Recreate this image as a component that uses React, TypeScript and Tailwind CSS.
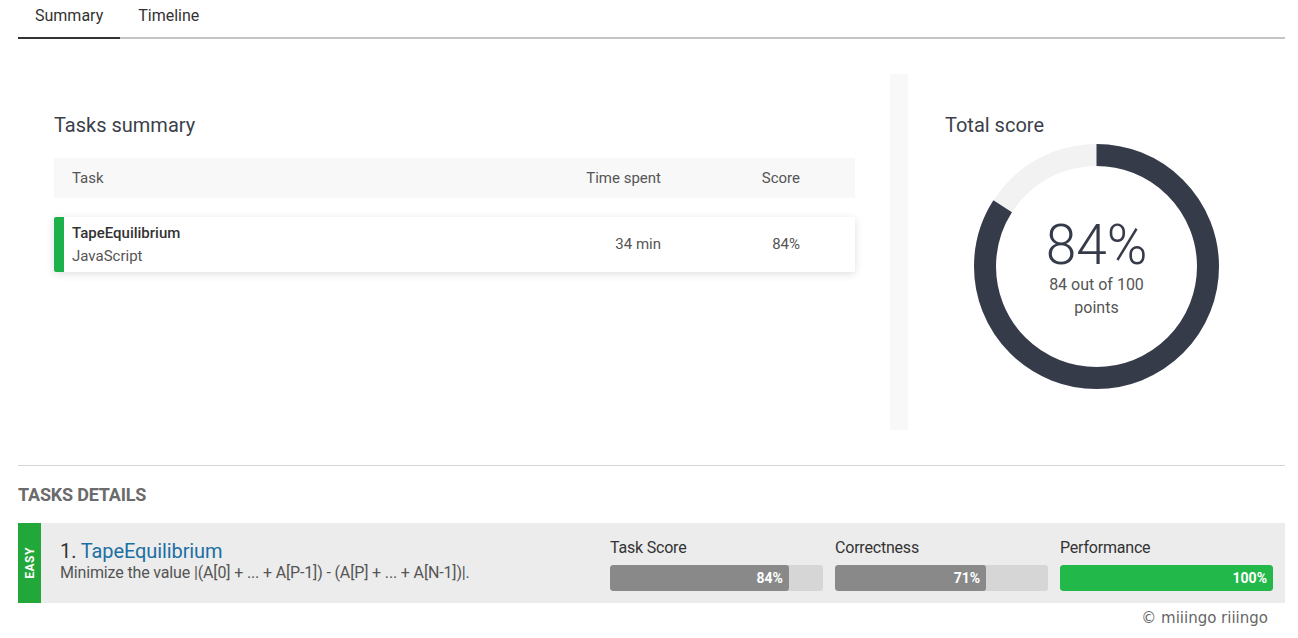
import React from 'react';

const TASKS = [{ name: 'TapeEquilibrium', lang: 'JavaScript', time: '34 min', score: '84%' }];

const METRICS = [
  { label: 'Task Score', value: 84, green: false },
  { label: 'Correctness', value: 71, green: false },
  { label: 'Performance', value: 100, green: true },
];

function Donut({ percent }: { percent: number }) {
  const r = 111.5;
  const c = 2 * Math.PI * r;
  return (
    <div className="relative w-[245px] h-[245px]">
      <svg width="245" height="245" viewBox="0 0 245 245">
        <circle cx="122.5" cy="122.5" r={r} fill="none" stroke="#f2f2f2" strokeWidth="22" />
        <circle
          cx="122.5"
          cy="122.5"
          r={r}
          fill="none"
          stroke="#363b4a"
          strokeWidth="22"
          strokeDasharray={`${(c * percent) / 100} ${c}`}
          transform="rotate(-90 122.5 122.5)"
        />
      </svg>
      <div className="absolute inset-0 flex flex-col items-center justify-center pt-[2px]">
        <div className="text-[55px] leading-[58px] text-[#363b4a] font-light">84%</div>
        <div className="text-[16px] leading-[23px] text-[#555] text-center mt-[-1px]">
          84 out of 100
          <br />
          points
        </div>
      </div>
    </div>
  );
}

export default function App() {
  return (
    <div className="pl-[18px] pr-[13px] bg-white min-h-[638px] text-[#333]" style={{ fontFamily: 'Roboto, "Noto Sans", sans-serif' }}>
      {/* tabs */}
      <div className="flex border-b-2 border-[#c4c4c4]">
        <div className="px-[17px] pt-[6px] pb-[11px] text-[16px] leading-[20px] text-[#333] border-b-2 border-[#333] -mb-[2px]">
          Summary
        </div>
        <div className="px-[18px] pt-[6px] pb-[11px] text-[16px] leading-[20px] text-[#333]">Timeline</div>
      </div>

      {/* summary */}
      <div className="flex mt-[35px]">
        <div className="flex-1 pl-[36px] pr-[35px] pt-[37px]">
          <h2 className="text-[20px] leading-[28px] text-[#3a3f4b] mb-[19px]">Tasks summary</h2>
          <div className="flex items-center h-[40px] bg-[#f8f8f9] text-[15px] text-[#555] pl-[18px]">
            <div className="flex-1">Task</div>
            <div className="w-[120px] text-right">Time spent</div>
            <div className="w-[139px] text-right">Score</div>
            <div className="w-[55px]" />
          </div>
          {TASKS.map((t) => (
            <div
              key={t.name}
              className="flex items-center h-[55px] mt-[19px] bg-white shadow-[0_2px_8px_rgba(0,0,0,0.13)] border-l-[10px] border-[#1db14b] rounded-l-[2px] pl-[8px] text-[15px]"
            >
              <div className="flex-1 leading-[23px]">
                <div className="font-medium text-[#333]">{t.name}</div>
                <div className="text-[#555]">{t.lang}</div>
              </div>
              <div className="w-[120px] text-right text-[#555]">{t.time}</div>
              <div className="w-[139px] text-right text-[#555]">{t.score}</div>
              <div className="w-[55px]" />
            </div>
          ))}
        </div>
        <div className="w-[395px] border-l-[18px] border-[#f8f8f8] pt-[37px] pb-[41px]">
          <h2 className="pl-[37px] text-[20px] leading-[28px] text-[#3a3f4b] mb-[5px]">Total score</h2>
          <div className="flex justify-center">
            <Donut percent={84} />
          </div>
        </div>
      </div>

      {/* details */}
      <div className="mt-[35px] border-t border-[#d4d4d4]">
        <h3 className="mt-[17px] text-[18px] leading-[24px] font-bold text-[#6b6b6b] tracking-[-0.2px]">TASKS DETAILS</h3>
        <div className="flex mt-[16px] h-[80px] bg-[#ececec]">
          <div className="w-[23px] bg-[#22a83a] flex items-center justify-center">
            <span className="block -rotate-90 text-white text-[12px] font-bold tracking-[0.5px]">EASY</span>
          </div>
          <div className="flex-1 pl-[19px] pt-[17px]">
            <div className="text-[20px] leading-[22px] text-[#333] tracking-[-0.1px]">
              1. <span className="text-[#1b6fa3]">TapeEquilibrium</span>
            </div>
            <div className="text-[16px] leading-[21px] text-[#555] tracking-[-0.15px]">
              Minimize the value |(A[0] + ... + A[P-1]) - (A[P] + ... + A[N-1])|.
            </div>
          </div>
          <div className="flex gap-[12px] pr-[12px] pt-[15px]">
            {METRICS.map((m) => (
              <div key={m.label} className="w-[213px]">
                <div className="text-[16px] leading-[20px] text-[#333] tracking-[-0.2px]">{m.label}</div>
                <div className="mt-[7px] h-[26px] bg-[#d6d6d6] rounded-[3px] overflow-hidden">
                  <div
                    className={`h-full rounded-[3px] flex items-center justify-end pr-[6px] text-white text-[14px] font-bold ${
                      m.green ? 'bg-[#22b84a]' : 'bg-[#898989]'
                    }`}
                    style={{ width: `${m.value}%` }}
                  >
                    {m.value}%
                  </div>
                </div>
              </div>
            ))}
          </div>
        </div>
        <div className="flex justify-end pr-[17px] pt-[4px]">
          <span className="text-[15px] text-[#666]" style={{ fontFamily: '"DejaVu Sans", sans-serif' }}>
            © miiingo riiingo
          </span>
        </div>
      </div>
    </div>
  );
}
